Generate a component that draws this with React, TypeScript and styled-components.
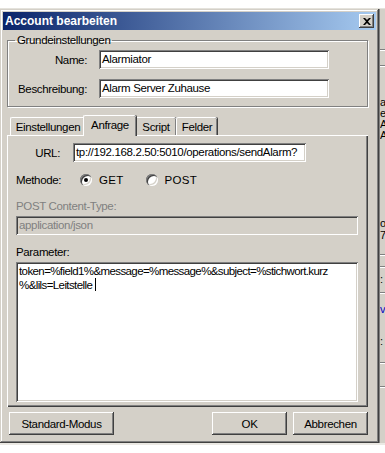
import React from 'react';
import styled, { createGlobalStyle } from 'styled-components';

const GlobalStyle = createGlobalStyle`
  html, body {
    margin: 0;
    padding: 0;
    background: #ffffff;
  }
  body {
    font-family: 'Liberation Sans', Arial, sans-serif;
    font-size: 11.5px;
    letter-spacing: -0.35px;
    color: #000;
  }
  * {
    box-sizing: border-box;
  }
`;

const Screen = styled.div`
  width: 385px;
  height: 453px;
  overflow: hidden;
  display: flex;
  flex-direction: column;
`;

const TopStrip = styled.div`
  height: 9px;
  border-bottom: 1px solid #e4e2dc;
  background: #fff;
`;

const Row = styled.div`
  display: flex;
`;

const Dialog = styled.div`
  width: 379px;
  height: 434px;
  padding: 3px;
  background: #d4d0c8;
  box-shadow: inset -1px -1px 0 #404040, inset 1px 1px 0 #d4d0c8, inset -2px -2px 0 #808080,
    inset 2px 2px 0 #ffffff;
  display: flex;
  flex-direction: column;
`;

const TitleBar = styled.div`
  height: 18px;
  display: flex;
  align-items: center;
  justify-content: space-between;
  padding: 0 2px 0 2px;
  background: linear-gradient(to right, #0a246a, #a6caf0);
`;

const Title = styled.span`
  font-weight: bold;
  font-size: 12px;
  letter-spacing: 0;
  color: #fff;
`;

const CloseButton = styled.div`
  width: 15px;
  height: 14px;
  background: #d4d0c8;
  box-shadow: inset -1px -1px 0 #404040, inset 1px 1px 0 #fff, inset -2px -2px 0 #808080;
  display: flex;
  align-items: center;
  justify-content: center;
`;

const Body = styled.div`
  flex: 1;
  display: flex;
  flex-direction: column;
  padding: 4px 8px 0 4px;
`;

const GroupBox = styled.fieldset`
  margin: 0;
  padding: 3px 8px 8px 0;
  border: 1px solid #808080;
  box-shadow: inset 1px 1px 0 #fff, 1px 1px 0 #fff;
`;

const Legend = styled.legend`
  padding: 0 2px;
  margin-left: 7px;
  line-height: 13px;
`;

const FormGrid = styled.div<{ $label: number }>`
  display: grid;
  grid-template-columns: ${({ $label }) => $label}px 1fr;
  column-gap: 12px;
  row-gap: 10px;
  align-items: center;
`;

const Label = styled.span`
  text-align: right;
  white-space: nowrap;
`;

const Field = styled.div<{ $width?: number; $disabled?: boolean }>`
  width: ${({ $width }) => ($width ? `${$width}px` : '100%')};
  height: 19px;
  padding: 2px 3px;
  background: ${({ $disabled }) => ($disabled ? '#d4d0c8' : '#fff')};
  color: ${({ $disabled }) => ($disabled ? '#808080' : '#000')};
  box-shadow: inset 1px 1px 0 #808080, inset -1px -1px 0 #fff, inset 2px 2px 0 #404040,
    inset -2px -2px 0 #d4d0c8;
  white-space: nowrap;
  overflow: hidden;
  line-height: 15px;
`;

const TabStrip = styled.div`
  display: flex;
  align-items: flex-end;
  margin-top: 8px;
  padding-left: 3px;
  height: 20px;
  position: relative;
  z-index: 1;
`;

const Tab = styled.div<{ $active?: boolean; $width: number }>`
  width: ${({ $width }) => $width}px;
  height: ${({ $active }) => ($active ? 21 : 18)}px;
  margin: ${({ $active }) => ($active ? '0 -1px -1px -2px' : '0')};
  padding-top: 2px;
  text-align: center;
  background: #d4d0c8;
  border-top: 1px solid #fff;
  border-left: 1px solid #fff;
  border-radius: 2px 2px 0 0;
  box-shadow: inset -1px 0 0 #808080, 1px 0 0 #404040;
  line-height: 15px;
  white-space: nowrap;
  z-index: ${({ $active }) => ($active ? 2 : 0)};
`;

const Panel = styled.div`
  height: 272px;
  padding: 8px 10px 0 9px;
  background: #d4d0c8;
  box-shadow: inset 1px 1px 0 #fff, inset -1px -1px 0 #404040, inset -2px -2px 0 #808080;
  display: flex;
  flex-direction: column;
`;

const UrlRow = styled.div`
  display: grid;
  grid-template-columns: 44px 1fr;
  column-gap: 13px;
  align-items: center;
`;

const MethodRow = styled.div`
  display: flex;
  align-items: center;
  height: 19px;
  margin-top: 8px;
`;

const MethodLabel = styled.span`
  width: 64px;
`;

const RadioOption = styled.label`
  display: flex;
  align-items: center;
  gap: 7px;
  margin-right: 22px;
  letter-spacing: 0.3px;
`;

const RadioCircle = styled.span<{ $checked?: boolean }>`
  width: 12px;
  height: 12px;
  border-radius: 50%;
  background: #fff;
  box-shadow: inset 1px 1px 0 #808080, inset 2px 2px 0 #404040, inset -1px -1px 0 #fff,
    inset -2px -2px 0 #d4d0c8;
  display: flex;
  align-items: center;
  justify-content: center;

  &::after {
    content: '';
    width: 4px;
    height: 4px;
    border-radius: 50%;
    background: ${({ $checked }) => ($checked ? '#000' : 'transparent')};
  }
`;

const FieldLabel = styled.div<{ $disabled?: boolean }>`
  margin-top: 10px;
  margin-bottom: 2px;
  height: 15px;
  line-height: 15px;
  color: ${({ $disabled }) => ($disabled ? '#808080' : '#000')};
`;

const TextArea = styled.div`
  height: 140px;
  padding: 3px 3px;
  background: #fff;
  box-shadow: inset 1px 1px 0 #808080, inset -1px -1px 0 #fff, inset 2px 2px 0 #404040,
    inset -2px -2px 0 #d4d0c8;
  line-height: 13px;
  letter-spacing: -0.6px;
`;

const Caret = styled.span`
  display: inline-block;
  width: 1px;
  height: 13px;
  margin-left: 3px;
  background: #000;
  vertical-align: -2px;
`;

const ButtonRow = styled.div`
  display: flex;
  margin-top: 5px;
  gap: 6px;
  padding-left: 2px;
`;

const Button = styled.div<{ $width: number }>`
  width: ${({ $width }) => $width}px;
  height: 23px;
  display: flex;
  align-items: center;
  justify-content: center;
  background: #d4d0c8;
  box-shadow: inset -1px -1px 0 #404040, inset 1px 1px 0 #fff, inset -2px -2px 0 #808080;
`;

const Spacer = styled.div`
  flex: 1;
`;

const SideWindow = styled.div`
  width: 6px;
  height: 434px;
  background: #d4d0c8;
  border-left: 1px solid #808080;
  overflow: hidden;
  display: flex;
  flex-direction: column;
  font-size: 11px;
  line-height: 10px;
  letter-spacing: 0;
`;

const SideLine = styled.div<{ $gap: number }>`
  margin-top: ${({ $gap }) => $gap}px;
  border-top: 1px solid #808080;
  border-bottom: 1px solid #fff;
`;

const SideText = styled.div<{ $gap: number; $blue?: boolean }>`
  margin-top: ${({ $gap }) => $gap}px;
  color: ${({ $blue }) => ($blue ? '#0000c0' : '#000')};
  white-space: nowrap;
`;

const BottomStrip = styled.div`
  height: 10px;
  border-top: 2px solid #ebe9e4;
  background: #fff;
`;

const CloseIcon = () => (
  <svg width="8" height="7" viewBox="0 0 8 7">
    <path d="M0 0h2l2 2 2-2h2L5 3.5 8 7H6L4 5 2 7H0l3-3.5z" fill="#000" />
  </svg>
);

const App: React.FC = () => (
  <Screen>
    <GlobalStyle />
    <TopStrip />
    <Row>
      <Dialog>
        <TitleBar>
          <Title>Account bearbeiten</Title>
          <CloseButton>
            <CloseIcon />
          </CloseButton>
        </TitleBar>
        <Body>
          <GroupBox>
            <Legend>Grundeinstellungen</Legend>
            <FormGrid $label={79}>
              <Label>Name:</Label>
              <Field $width={230}>Alarmiator</Field>
              <Label>Beschreibung:</Label>
              <Field $width={230}>Alarm Server Zuhause</Field>
            </FormGrid>
          </GroupBox>
          <TabStrip>
            <Tab $width={75}>Einstellungen</Tab>
            <Tab $width={53} $active>
              Anfrage
            </Tab>
            <Tab $width={41}>Script</Tab>
            <Tab $width={41}>Felder</Tab>
          </TabStrip>
          <Panel>
            <UrlRow>
              <Label>URL:</Label>
              <Field $width={233}>tp://192.168.2.50:5010/operations/sendAlarm?</Field>
            </UrlRow>
            <MethodRow>
              <MethodLabel>Methode:</MethodLabel>
              <RadioOption>
                <RadioCircle $checked />
                GET
              </RadioOption>
              <RadioOption>
                <RadioCircle />
                POST
              </RadioOption>
            </MethodRow>
            <FieldLabel $disabled>POST Content-Type:</FieldLabel>
            <Field $disabled>application/json</Field>
            <FieldLabel>Parameter:</FieldLabel>
            <TextArea>
              token=%field1%&amp;message=%message%&amp;subject=%stichwort.kurz
              <br />
              %&amp;lils=Leitstelle
              <Caret />
            </TextArea>
          </Panel>
          <ButtonRow>
            <Button $width={105}>Standard-Modus</Button>
            <Spacer />
            <Button $width={75}>OK</Button>
            <Button $width={75}>Abbrechen</Button>
          </ButtonRow>
        </Body>
      </Dialog>
      <SideWindow>
        <SideLine $gap={40} />
        <SideLine $gap={14} />
        <SideText $gap={30}>a</SideText>
        <SideText $gap={1}>el</SideText>
        <SideText $gap={1}>A</SideText>
        <SideText $gap={1}>A</SideText>
        <SideText $gap={78}>o</SideText>
        <SideText $gap={2}>7</SideText>
        <SideLine $gap={14} />
        <SideLine $gap={10} />
        <SideText $gap={6}>:</SideText>
        <SideLine $gap={8} />
        <SideText $gap={10} $blue>
          v
        </SideText>
        <SideText $gap={22}>:</SideText>
        <SideLine $gap={16} />
        <SideLine $gap={22} />
      </SideWindow>
    </Row>
    <BottomStrip />
  </Screen>
);

export default App;
